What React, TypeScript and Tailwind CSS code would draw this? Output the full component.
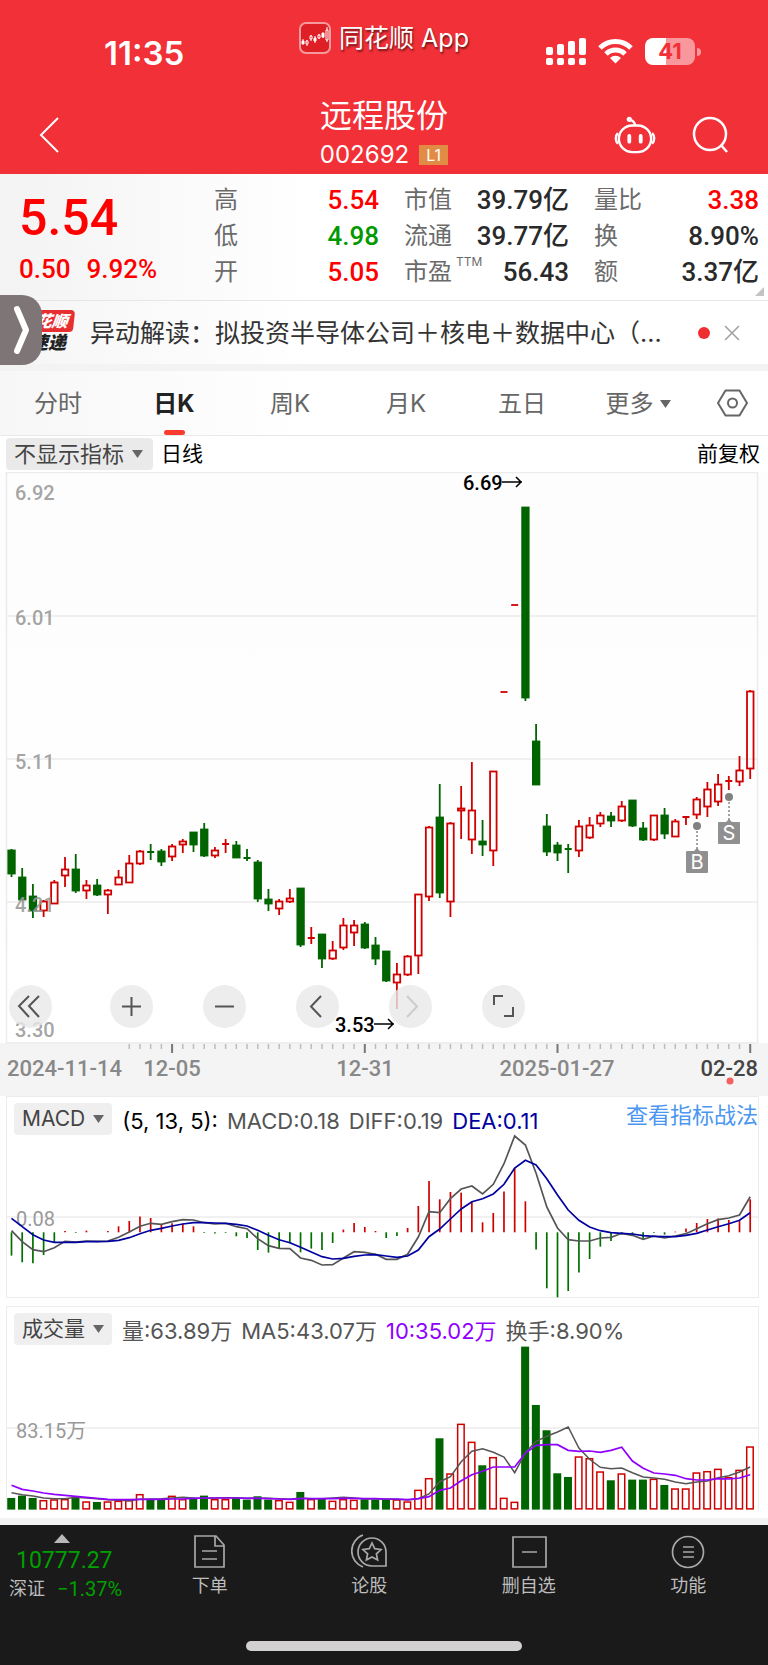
import { useState } from 'react';
import type { ReactNode } from 'react';

const NUM = "font-['Roboto','Noto_Sans_CJK_SC',sans-serif]";

const UP = '#d00000';
const DOWN = '#006400';

type Candle = [dir: 'u' | 'd', top: number, bottom: number, high: number, low: number];

// body top, body bottom, wick top, wick bottom in chart units
const candles: Candle[] = [
  ['d', 850, 874, 849, 877], ['d', 877, 900, 868, 901], ['d', 896, 911, 884, 918], ['u', 901, 911, 900, 917],
  ['u', 882, 904, 880, 904], ['u', 869, 876, 857, 887], ['d', 869, 891, 854, 893], ['u', 885, 891, 880, 899],
  ['d', 885, 895, 879, 896], ['u', 890, 895, 889, 914], ['u', 877, 885, 870, 885], ['u', 863, 883, 855, 883],
  ['u', 851, 864, 850, 865], ['d', 852, 852, 844, 860], ['d', 851, 862, 849, 866], ['u', 846, 857, 844, 861],
  ['u', 841, 845, 839, 853], ['d', 832, 845, 832, 852], ['d', 829, 856, 823, 857], ['u', 850, 856, 847, 858],
  ['u', 844, 844, 839, 853], ['d', 845, 858, 841, 858], ['d', 858, 858, 849, 861], ['d', 862, 899, 860, 902],
  ['d', 899, 904, 889, 911], ['u', 901, 909, 899, 915], ['u', 898, 902, 889, 903], ['d', 888, 945, 888, 947],
  ['u', 938, 938, 927, 944], ['d', 934, 959, 934, 968], ['u', 950, 959, 941, 960], ['u', 925, 948, 918, 950],
  ['u', 925, 933, 920, 946], ['d', 924, 948, 922, 949], ['d', 945, 959, 937, 965], ['d', 951, 981, 951, 982],
  ['u', 974, 983, 963, 1009], ['u', 956, 975, 955, 976], ['u', 894, 956, 894, 974], ['u', 827, 897, 826, 901],
  ['d', 817, 893, 784, 898], ['u', 823, 902, 822, 917], ['u', 808, 811, 786, 839], ['u', 810, 840, 762, 854],
  ['d', 841, 845, 820, 856], ['u', 771, 851, 771, 866], ['u', 692, 692, 692, 692], ['u', 605, 605, 605, 605],
  ['d', 507, 698, 507, 701], ['d', 741, 785, 724, 785], ['d', 826, 852, 814, 856], ['d', 845, 853, 842, 861],
  ['d', 849, 849, 844, 873], ['u', 826, 851, 820, 857], ['u', 825, 838, 817, 839], ['u', 815, 824, 812, 827],
  ['d', 816, 821, 812, 827], ['u', 806, 821, 801, 822], ['d', 800, 826, 800, 827], ['d', 828, 840, 822, 841],
  ['u', 815, 840, 815, 841], ['d', 815, 834, 808, 839], ['u', 821, 837, 819, 837], ['u', 817, 817, 816, 825],
  ['u', 799, 815, 797, 819], ['u', 789, 807, 782, 817], ['u', 784, 802, 774, 806], ['u', 781, 781, 776, 790],
  ['u', 770, 782, 756, 786], ['u', 691, 769, 690, 779],
];

// indicator series, three units per pixel, measured from the panel origin
const macd = [
  -70, -90, -93, -68, -30, 4, -2, 5, 0, 4, 18, 34, 47, 43, 25, 27, 26, 18, -2, -4, -2, -12, -17, -53, -61, -49, -33,
  -60, -49, -53, -32, 8, 28, 16, 4, -17, -11, 13, 79, 154, 99, 121, 119, 93, 30, 58, 122, 193, 93, -52, -168, -195,
  -176, -121, -80, -43, -26, -7, -7, -19, -2, -7, 2, 11, 28, 40, 41, 37, 35, 99,
];
const diff = [
  422, 455, 479, 485, 473, 454, 456, 453, 454, 453, 442, 426, 409, 400, 403, 395, 389, 390, 398, 402, 400, 410, 416,
  446, 467, 475, 476, 504, 511, 525, 524, 504, 485, 487, 493, 508, 508, 493, 441, 365, 368, 326, 297, 288, 312, 283,
  221, 138, 165, 250, 351, 414, 449, 453, 453, 444, 442, 430, 436, 448, 438, 444, 438, 431, 416, 401, 389, 384, 375,
  320,
];
const dea = [
  385, 410, 434, 450, 457, 457, 457, 455, 455, 454, 451, 443, 431, 421, 415, 408, 402, 398, 398, 399, 400, 403, 408,
  421, 436, 449, 458, 472, 486, 500, 507, 505, 499, 495, 494, 498, 502, 498, 480, 440, 417, 387, 357, 335, 326, 312,
  283, 234, 211, 225, 266, 315, 360, 391, 411, 422, 428, 430, 432, 437, 439, 440, 440, 436, 430, 420, 410, 401, 391,
  368,
];
const volume = [
  594, 587, 594, 600, 598, 597, 594, 604, 606, 604, 602, 600, 582, 599, 599, 587, 597, 594, 587, 597, 597, 594, 599,
  589, 599, 600, 605, 576, 597, 597, 602, 597, 599, 598, 599, 600, 598, 604, 569, 534, 415, 520, 371, 425, 496, 471,
  593, 605, 140, 315, 391, 520, 531, 469, 474, 514, 541, 520, 539, 539, 536, 555, 565, 565, 517, 513, 506, 531, 509,
  439,
];
const ma5 = [
  578, 584, 588, 594, 596, 596, 592, 594, 596, 599, 601, 602, 598, 597, 596, 594, 592, 594, 595, 594, 593, 593, 595,
  594, 595, 596, 598, 594, 596, 596, 594, 592, 594, 597, 597, 598, 598, 600, 596, 582, 545, 530, 485, 454, 446, 457,
  471, 518, 458, 424, 409, 396, 381, 444, 478, 502, 506, 504, 518, 531, 534, 538, 546, 551, 546, 543, 533, 527, 516,
  501,
];
const ma10 = [
  556, 568, 573, 579, 583, 586, 589, 592, 595, 598, 599, 599, 598, 598, 598, 597, 597, 595, 594, 594, 594, 594, 595,
  595, 596, 597, 598, 596, 596, 596, 596, 595, 595, 596, 596, 597, 597, 599, 596, 590, 571, 564, 542, 524, 514, 501,
  501, 501, 459, 436, 434, 434, 451, 454, 453, 457, 451, 442, 483, 505, 519, 522, 526, 536, 540, 540, 536, 537, 534,
  524,
];

const xAt = (i: number) => 11.5 + i * 10.706;
const toPoints = (series: number[], origin: number) =>
  series.map((v, i) => `${xAt(i).toFixed(1)},${(origin + v / 3).toFixed(1)}`).join(' ');

function StatusBar() {
  return (
    <div className="grid grid-cols-3 h-[86px] text-white">
      <div className="pl-[104px] pt-[35px] text-[33px] leading-9 font-semibold">11:35</div>
      <div className="flex items-start justify-center gap-2 pt-[22px]">
        <svg className="w-8 h-8 shrink-0" viewBox="0 0 32 32">
          <rect x="1" y="1" width="30" height="30" rx="6" fill="#df1f26" stroke="#f79a9d" strokeWidth="2" />
          <g stroke="#fff" strokeWidth="1">
            <path d="M4 17v5M8 18v6M12 13v6M16 14v7M20 12v5M24 11v5M28 5v15" />
            <path d="M3 19h2v3H3zM15 16h2v3h-2zM23 11h2v4h-2z" fill="#fff" />
            <path d="M7 19h2v3H7zM11 14h2v3h-2zM19 13h2v3h-2zM27 8h2v10h-2z" fill="#df1f26" />
          </g>
        </svg>
        <span className="text-[25px] leading-8 whitespace-nowrap [text-shadow:1px_2px_2px_rgba(0,0,0,0.55)]">
          同花顺 App
        </span>
      </div>
      <div className="flex items-start justify-end gap-3 pr-[67px] pt-[38px]">
        <svg className="w-10 h-7" viewBox="0 0 40 28" fill="#fff">
          <rect x="0" y="9" width="7" height="8" rx="2" />
          <rect x="11" y="6" width="7" height="11" rx="2" />
          <rect x="22" y="3" width="7" height="14" rx="2" />
          <rect x="33" y="0" width="7" height="17" rx="2" />
          <rect x="0" y="20" width="7" height="7" rx="2" />
          <rect x="11" y="20" width="7" height="7" rx="2" />
          <rect x="22" y="20" width="7" height="7" rx="2" />
          <rect x="33" y="20" width="7" height="7" rx="2" />
        </svg>
        <svg className="w-[35px] h-7" viewBox="0 0 35 28" fill="none" stroke="#fff" strokeWidth="5">
          <path d="M2 10a22 22 0 0 1 31 0" />
          <path d="M8 16a13.5 13.5 0 0 1 19 0" />
          <path d="M17.5 25.5L12 20a8 8 0 0 1 11 0z" fill="#fff" stroke="none" />
        </svg>
        <div className="flex items-center">
          <div className="w-[50px] h-[27px] rounded-lg bg-linear-to-r from-white from-42% to-[#f8989c] to-42% text-center text-[22px] leading-[27px] font-bold text-[#f23038]">
            41
          </div>
          <div className="w-1 h-2 ml-0.5 rounded-r-full bg-[#f8989c]" />
        </div>
      </div>
    </div>
  );
}

function TitleBar() {
  return (
    <div className="grid grid-cols-3 h-[88px] items-start text-white">
      <button aria-label="返回" className="w-10 h-10 ml-[30px] mt-7">
        <svg className="w-10 h-10" viewBox="0 0 40 40" fill="none" stroke="#fff" strokeWidth="2">
          <path d="M28 4L11 21l17 17" />
        </svg>
      </button>
      <div className="flex flex-col items-center">
        <h1 className="pt-2.5 text-[32px] leading-10">远程股份</h1>
        <div className="flex items-center gap-2.5 pt-1 text-2xl leading-[30px]">
          002692
          <span className="w-[29px] h-5 bg-[#e08c45] text-center text-base leading-5">L1</span>
        </div>
      </div>
      <div className="flex justify-end gap-[36px] pr-10 pt-[29px]">
        <button aria-label="智能助手">
          <svg className="w-[42px] h-[38px]" viewBox="0 0 44 40" fill="none" stroke="#fff" strokeWidth="2.5">
            <rect x="5" y="10" width="34" height="28" rx="14" />
            <path d="M4 18c-3 3-3 8 0 11M40 18c3 3 3 8 0 11M22 10c0-4-2-5-5-6" />
            <circle cx="16" cy="3.5" r="1.5" />
            <path d="M16 21v6M28 21v6" strokeWidth="4" strokeLinecap="round" />
          </svg>
        </button>
        <button aria-label="搜索">
          <svg className="w-9 h-10" viewBox="0 0 36 40" fill="none" stroke="#fff" strokeWidth="2.5">
            <circle cx="18" cy="19" r="16" />
            <path d="M29 30l6 7" />
          </svg>
        </button>
      </div>
    </div>
  );
}

function Stat({ label, sup, value, tone = 'text-[#2a2a2a]' }: { label: string; sup?: string; value: string; tone?: string }) {
  return (
    <div className="flex justify-between whitespace-nowrap">
      <dt className="flex text-2xl leading-9 text-[#6b6b6b]">
        {label}
        {sup && <sup className="top-0 pl-1 text-xs leading-4">{sup}</sup>}
      </dt>
      <dd className={`${NUM} text-[26px] leading-9 font-medium ${tone}`}>{value}</dd>
    </div>
  );
}

function Quote() {
  return (
    <section className="relative flex h-[127px] bg-linear-to-r from-[#f3f3f3] to-white to-40% border-b border-[#e6e6e6]">
      <div className={`${NUM} w-[214px] pl-[19px] font-medium text-[#ff0000]`}>
        <div className="pt-4 text-[50px] leading-[56px]">5.54</div>
        <div className="flex gap-4 pt-[5px] text-[26px] leading-9">
          <span>0.50</span>
          <span>9.92%</span>
        </div>
      </div>
      <dl className="grid grid-cols-3 grid-rows-[repeat(3,36px)] grid-flow-col content-start flex-1 gap-x-[25px] pt-2 pr-[9px]">
        <Stat label="高" value="5.54" tone="text-[#ff0000]" />
        <Stat label="低" value="4.98" tone="text-[#009900]" />
        <Stat label="开" value="5.05" tone="text-[#ff0000]" />
        <Stat label="市值" value="39.79亿" />
        <Stat label="流通" value="39.77亿" />
        <Stat label="市盈" sup="TTM" value="56.43" />
        <Stat label="量比" value="3.38" tone="text-[#ff0000]" />
        <Stat label="换" value="8.90%" />
        <Stat label="额" value="3.37亿" />
      </dl>
      <svg className="absolute right-1 bottom-1 w-[9px] h-[9px]" viewBox="0 0 9 9">
        <path d="M9 0v9H0z" fill="#c4c4c4" />
      </svg>
    </section>
  );
}

function NewsBar() {
  return (
    <section className="relative flex items-center h-[70px] pl-[90px] pr-7 bg-linear-to-r from-[#f5f5f5] to-white to-40% border-b-[7px] border-[#f3f3f3]">
      <div className="absolute left-[14px] top-[9px] w-[60px] text-center italic font-black leading-[22px]">
        <div className="h-[22px] -skew-x-6 rounded-sm bg-[#e62e33] text-base leading-[22px] text-white">同花顺</div>
        <div className="pl-2 text-lg leading-[22px] text-[#222]">速递</div>
      </div>
      <button aria-label="展开侧栏" className="absolute left-0 -top-1.5 w-[42px] h-[70px] rounded-r-[20px] bg-[#7d7576]">
        <svg className="w-[42px] h-[70px]" viewBox="0 0 42 70" fill="none" stroke="#fff" strokeWidth="6" strokeLinecap="round" strokeLinejoin="round">
          <path d="M17 14l9 21-9 21" />
        </svg>
      </button>
      <a href="#news" className="flex-1 truncate text-[25px] leading-8 text-[#333]">
        异动解读：拟投资半导体公司＋核电＋数据中心（...
      </a>
      <span className="w-3 h-3 ml-7 rounded-full bg-[#ee2e30]" />
      <button aria-label="关闭" className="ml-3.5">
        <svg className="w-4 h-4" viewBox="0 0 16 16" stroke="#a0a0a0" strokeWidth="1.5">
          <path d="M1 1l14 14M15 1L1 15" />
        </svg>
      </button>
    </section>
  );
}

function Caret() {
  return (
    <svg className="inline-block w-[11px] h-2" viewBox="0 0 11 8">
      <path d="M0 0h11L5.5 8z" fill="#666" />
    </svg>
  );
}

function PeriodTabs() {
  const [active, setActive] = useState('日K');
  return (
    <nav className="flex h-[65px] bg-linear-to-r from-[#f7f7f7] to-white to-40% border-b border-[#e9e9e9]">
      {['分时', '日K', '周K', '月K', '五日', '更多'].map((tab) => (
        <button
          key={tab}
          onClick={() => setActive(tab)}
          className={`relative flex flex-1 items-center justify-center gap-1.5 pt-0.5 text-2xl ${
            tab === active ? 'font-bold text-[#222]' : 'text-[#666]'
          }`}
        >
          {tab}
          {tab === '更多' && <Caret />}
          {tab === active && <span className="absolute bottom-0 w-[21px] h-[5px] rounded-sm bg-[#fb3a30]" />}
        </button>
      ))}
      <button aria-label="设置" className="flex w-[72px] items-center justify-center">
        <svg className="w-[31px] h-[28px]" viewBox="0 0 31 28" fill="none" stroke="#666" strokeWidth="2">
          <path d="M8.5 1.5h14L30 14l-7.5 12.5h-14L1 14z" strokeLinejoin="round" />
          <circle cx="15.5" cy="14" r="4.5" />
        </svg>
      </button>
    </nav>
  );
}

function ZoomButton({ label, className = '', children }: { label: string; className?: string; children: ReactNode }) {
  return (
    <button aria-label={label} className={`w-[43px] h-[43px] rounded-full bg-[#e8e8e8]/80 ${className}`}>
      <svg className="w-[43px] h-[43px]" viewBox="0 0 43 43" fill="none" stroke="#555" strokeWidth="2">
        {children}
      </svg>
    </button>
  );
}

function TradeMark({ x, y, text }: { x: number; y: number; text: string }) {
  return (
    <g>
      <circle cx={x} cy={y} r="4" fill="#808080" />
      <path d={`M${x} ${y + 5}v18`} stroke="#888" strokeWidth="1.5" strokeDasharray="2 2" />
      <path d={`M${x - 4} ${y + 26}l4-4 4 4z`} fill="#909090" />
      <rect x={x - 11} y={y + 25} width="22" height="22" rx="1" fill="#909090" />
      <text x={x} y={y + 43} fontSize="20" fill="#fff" textAnchor="middle">{text}</text>
    </g>
  );
}

function KLineChart() {
  return (
    <section className="relative bg-linear-to-b from-[#fdfdfd] to-white">
      <svg className="block w-full" viewBox="0 472 768 624">
        <rect x="0" y="1043" width="768" height="53" fill="#f4f4f4" />
        <path d="M6.5 1043V472.5H757.5V1043M6 616h752M6 759h752M6 902h752M6 1043h752" fill="none" stroke="#ececec" strokeWidth="1.5" />
        {candles.map(([dir, top, bottom, high, low], i) => {
          const x = xAt(i);
          const color = dir === 'u' ? UP : DOWN;
          if (bottom - top < 2) {
            return <path key={i} d={`M${x - 3.5} ${top}h7M${x} ${high}V${low}`} stroke={color} strokeWidth="1.8" />;
          }
          return (
            <g key={i} stroke={color} strokeWidth="1.8">
              <path d={`M${x} ${high}V${top}M${x} ${bottom}V${low}`} />
              <rect x={x - 3.2} y={top + 0.5} width="6.5" height={bottom - top - 1} fill={dir === 'u' ? 'none' : color} />
            </g>
          );
        })}
        <g className={NUM} fontSize="20" fill="#999" fillOpacity="0.9" fontWeight="500">
          <text x="15" y="500">6.92</text>
          <text x="15" y="625">6.01</text>
          <text x="15" y="769">5.11</text>
          <text x="15" y="912">4.21</text>
          <text x="15" y="1037">3.30</text>
        </g>
        <TradeMark x={697} y={826} text="B" />
        <TradeMark x={729} y={797} text="S" />
        <g className={NUM} fontSize="20" fill="#000" fontWeight="500">
          <text x="463" y="490">6.69</text>
          <text x="335" y="1032">3.53</text>
        </g>
        <path d="M502 482h20M516 477l5 5-5 5M374 1024h20M388 1019l5 5-5 5" fill="none" stroke="#000" strokeWidth="1.5" />
        {candles.map((_, i) =>
          i < 11 ? null : (
            <path
              key={i}
              d={`M${xAt(i)} 1044v${(i - 15) % 18 === 0 ? 9 : 5}`}
              stroke={(i - 15) % 18 === 0 ? '#777' : '#bbb'}
              strokeWidth={(i - 15) % 18 === 0 ? 2 : 1.5}
            />
          ),
        )}
        <g className="font-['Roboto',sans-serif]" fontSize="22" fill="#888" fontWeight="500">
          <text x="7" y="1076">2024-11-14</text>
          <text x="172" y="1076" textAnchor="middle">12-05</text>
          <text x="365" y="1076" textAnchor="middle">12-31</text>
          <text x="557" y="1076" textAnchor="middle">2025-01-27</text>
          <text x="758" y="1076" textAnchor="end" fill="#444">02-28</text>
        </g>
        <circle cx="730" cy="1081" r="3.5" fill="#f5605f" />
      </svg>
      <div className="absolute left-[9px] bottom-[68px] flex gap-[50px]">
        <ZoomButton label="最早" className="mr-2">
          <path d="M20 11L10 21l10 11M30 11L20 21l10 11" />
        </ZoomButton>
        <ZoomButton label="放大">
          <path d="M12 21.5h19M21.5 12v19" />
        </ZoomButton>
        <ZoomButton label="缩小">
          <path d="M12 21.5h19" />
        </ZoomButton>
        <ZoomButton label="向左">
          <path d="M25 11L15 21.5 25 32" />
        </ZoomButton>
        <ZoomButton label="向右">
          <path d="M18 11l10 10.5L18 32" stroke="#ccc" />
        </ZoomButton>
        <ZoomButton label="全屏">
          <path d="M12 20v-9h9M31 22v9h-9" />
        </ZoomButton>
      </div>
    </section>
  );
}

function IndicatorButton({ children }: { children: ReactNode }) {
  return (
    <button className="flex items-center gap-2 h-8 px-2 rounded-sm bg-[#efefef] text-[21px] text-[#444]">
      {children}
      <Caret />
    </button>
  );
}

function MacdPanel() {
  return (
    <section className="ml-[6px] mr-[9px] border border-[#ececec]">
      <div className="flex items-start pl-[7px] pt-[6px] h-[39px] text-[22px] leading-8 text-[#555] whitespace-nowrap">
        <IndicatorButton>MACD</IndicatorButton>
        <div className="flex gap-[9px] pl-2.5 pt-0.5">
          <span className="text-black">(5, 13, 5):</span>
          <span>MACD:0.18</span>
          <span>DIFF:0.19</span>
          <span className="text-[#0000a0]">DEA:0.11</span>
        </div>
        <a href="#guide" className="ml-auto -mt-1 text-[#4a96f0]">查看指标战法</a>
      </div>
      <svg className="block w-full overflow-visible" viewBox="7 1136 751 161" fill="none">
        <path d="M7 1217h751" stroke="#ececec" strokeWidth="1.5" />
        <text x="16" y="1226" className={NUM} fontSize="20" fill="#999">0.08</text>
        {macd.map((v, i) => (
          <path key={i} d={`M${xAt(i)} 1232.3v${(-v / 3).toFixed(1)}`} stroke={v > 0 ? '#d00000' : '#007000'} strokeWidth="1.7" />
        ))}
        <polyline points={toPoints(diff, 1090)} stroke="#555" strokeWidth="1.7" />
        <polyline points={toPoints(dea, 1090)} stroke="#0000a0" strokeWidth="1.7" />
      </svg>
    </section>
  );
}

function VolumePanel() {
  return (
    <section className="mt-2 ml-[6px] mr-[9px] border border-b-0 border-[#ececec]">
      <div className="flex items-start pl-[7px] pt-[6px] h-[39px] text-[22px] leading-8 text-[#555] whitespace-nowrap">
        <IndicatorButton>成交量</IndicatorButton>
        <div className="flex gap-[9px] pl-2.5 pt-0.5">
          <span>量:63.89万</span>
          <span>MA5:43.07万</span>
          <span className="text-[#9000ff]">10:35.02万</span>
          <span>换手:8.90%</span>
        </div>
      </div>
      <svg className="block w-full" viewBox="7 1346 751 164" fill="none">
        <path d="M7 1428h751" stroke="#ececec" strokeWidth="1.5" />
        <text x="16" y="1438" className={NUM} fontSize="20" fill="#999">83.15万</text>
        {volume.map((v, i) => {
          const up = candles[i][0] === 'u';
          return (
            <rect
              key={i}
              x={xAt(i) - 3.5}
              y={1300.7 + v / 3}
              width="6.5"
              height={(629 - v) / 3 - 1.5}
              stroke={up ? UP : DOWN}
              strokeWidth="1.5"
              fill={up ? 'none' : DOWN}
            />
          );
        })}
        <polyline points={toPoints(ma5, 1300)} stroke="#555" strokeWidth="1.5" />
        <polyline points={toPoints(ma10, 1300)} stroke="#9000ff" strokeWidth="1.7" />
      </svg>
    </section>
  );
}

function NavItem({ label, children }: { label: string; children: ReactNode }) {
  return (
    <button className="flex flex-1 flex-col items-center gap-[5px] pt-2 text-lg leading-6 text-[#bdbdbd]">
      <svg className="w-9 h-9" viewBox="0 0 36 36" fill="none" stroke="#a8a8a8" strokeWidth="1.7">
        {children}
      </svg>
      {label}
    </button>
  );
}

function BottomNav() {
  return (
    <footer className="h-[140px] border-t-[7px] border-[#f3f3f3] box-content bg-[#1a1a1a]">
      <div className="flex h-[116px] items-start">
        <button className={`${NUM} flex w-[130px] flex-col items-start pt-[9px] text-[#00a000]`}>
          <svg className="w-4 h-[9px] ml-[54px]" viewBox="0 0 16 9">
            <path d="M8 0l8 9H0z" fill="#b8b8b8" />
          </svg>
          <span className="pl-[16px] pt-0.5 text-[23px] leading-8">10777.27</span>
          <span className="flex gap-3 pl-[9px] text-xl leading-6">
            <span className="text-lg leading-6 text-[#bdbdbd]">深证</span>
            −1.37%
          </span>
        </button>
        <NavItem label="下单">
          <path d="M3 3h21l8 9v22H3zM23 3v10h9M10 18h15M10 26h15" />
        </NavItem>
        <NavItem label="论股">
          <path d="M12 2a17 17 0 0 0 0 32M35 33H21a14 14 0 1 1 14-14z" />
          <path d="M21 10l2.7 5.7 6.3.8-4.6 4.3 1.2 6.2-5.6-3-5.6 3 1.2-6.2-4.6-4.3 6.3-.8z" />
        </NavItem>
        <NavItem label="删自选">
          <path d="M2 4h33v30H2zM11 19h15" />
        </NavItem>
        <NavItem label="功能">
          <circle cx="18" cy="19" r="15.5" />
          <path d="M13 14h11M13 19h11M13 24h11" />
        </NavItem>
      </div>
      <div className="w-[276px] h-2.5 mx-auto rounded-full bg-[#d2d0d0]" />
    </footer>
  );
}

export default function App() {
  return (
    <div className="w-full overflow-hidden bg-white font-['Inter','Noto_Sans_CJK_SC',sans-serif]">
      <header className="bg-[#f23038]">
        <StatusBar />
        <TitleBar />
      </header>
      <main>
        <Quote />
        <NewsBar />
        <PeriodTabs />
        <div className="flex items-center h-9 pl-[6px] pr-2 text-[21px]">
          <button className="flex items-center gap-2 h-8 pl-2 pr-2.5 rounded-sm bg-[#eaeaea] text-[22px] text-[#444]">
            不显示指标
            <Caret />
          </button>
          <span className="pl-2">日线</span>
          <span className="ml-auto">前复权</span>
        </div>
        <KLineChart />
        <MacdPanel />
        <VolumePanel />
        <div className="h-2" />
      </main>
      <BottomNav />
    </div>
  );
}
